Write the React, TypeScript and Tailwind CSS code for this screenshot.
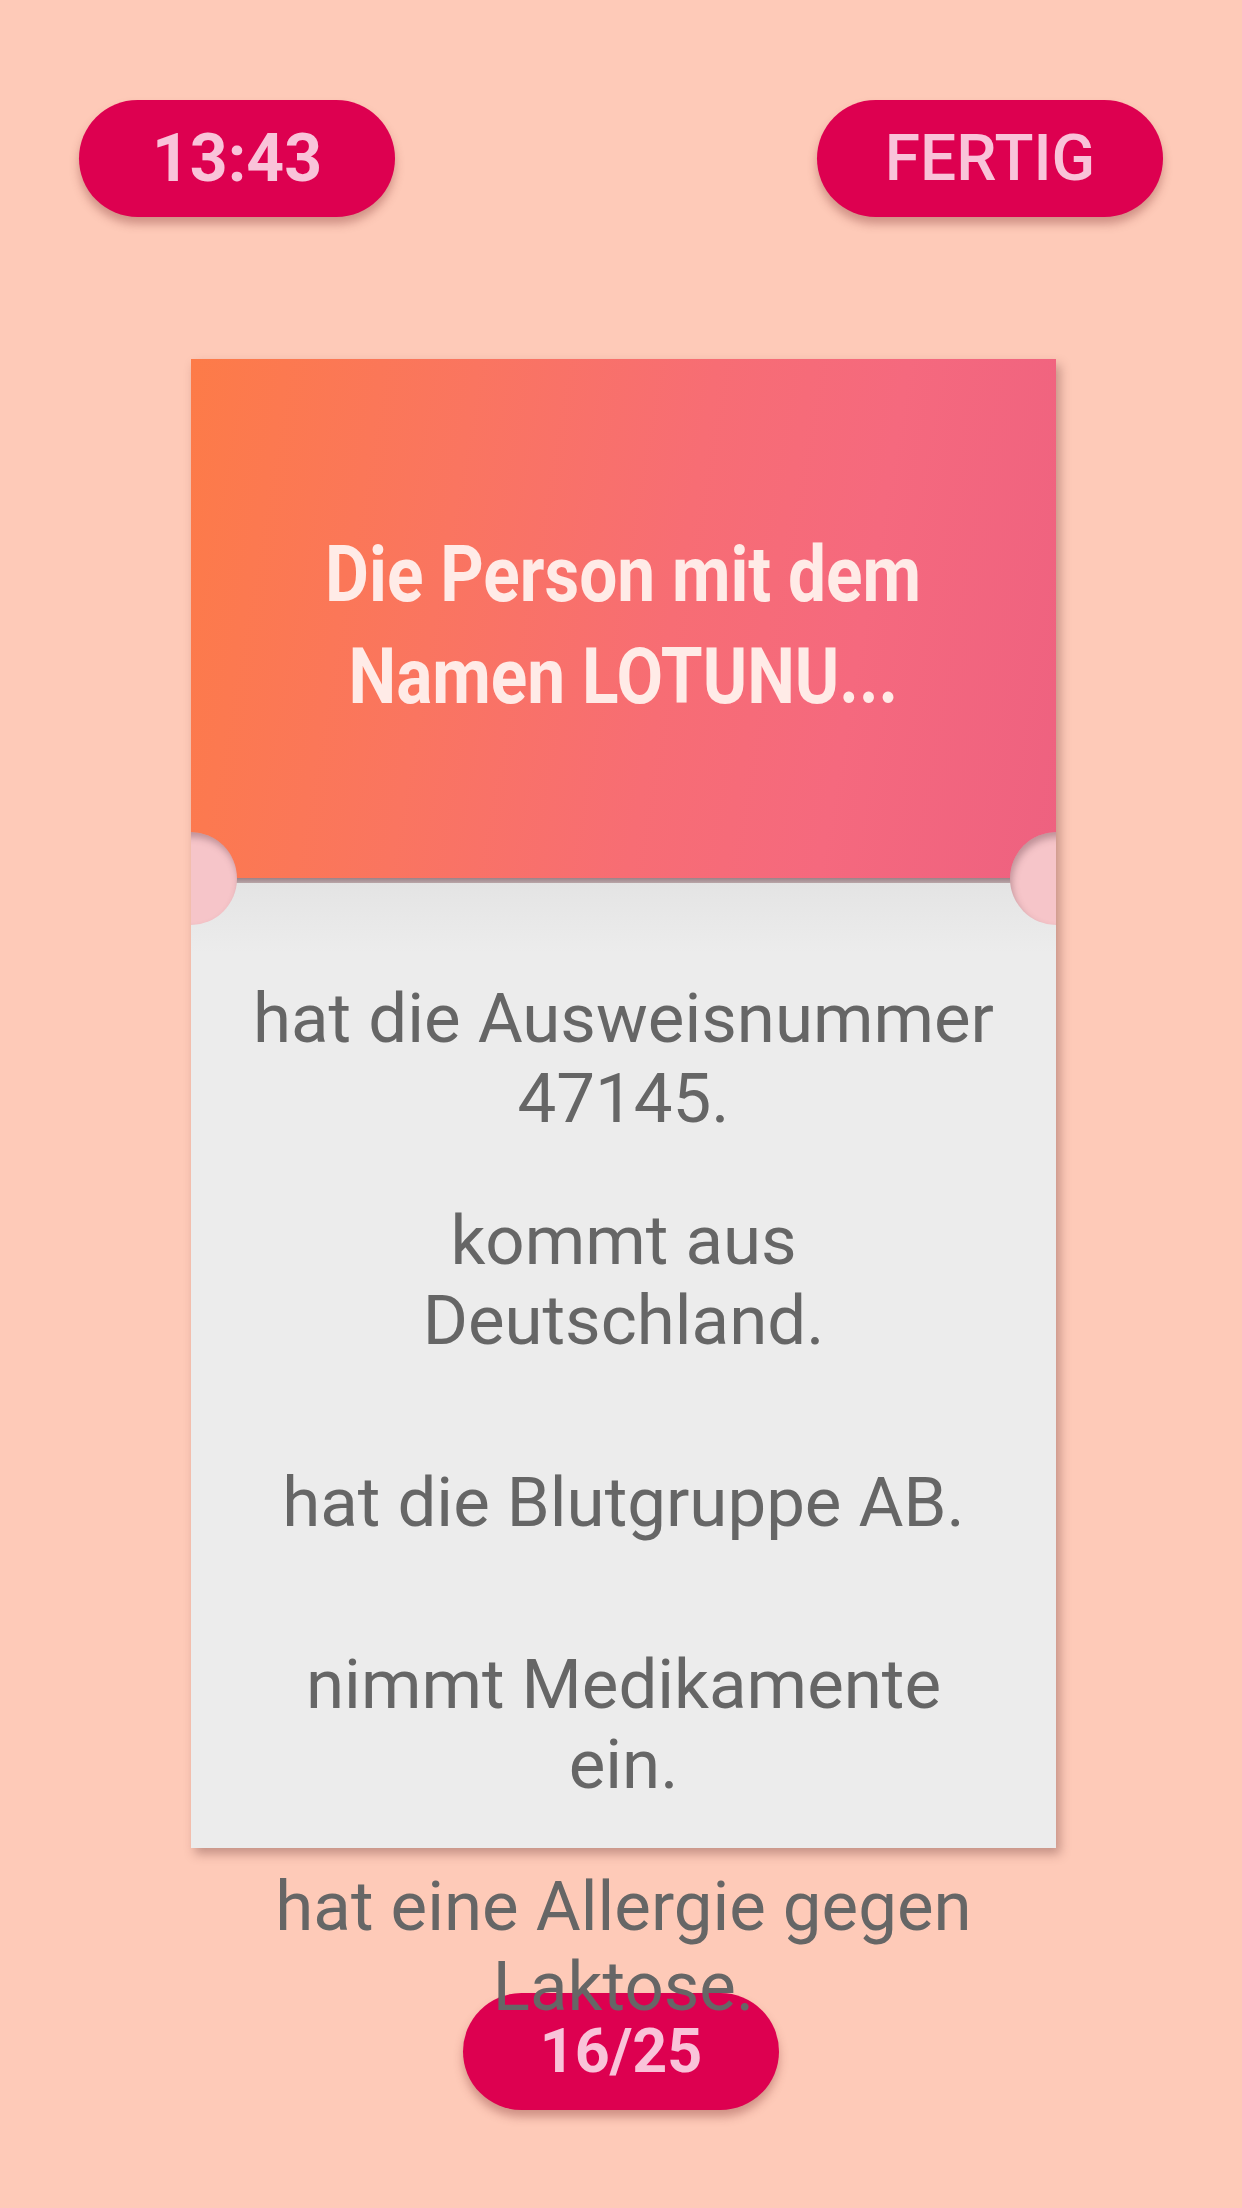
import React from "react";

const items: string[][] = [
  ["hat die Ausweisnummer", "47145."],
  ["kommt aus", "Deutschland."],
  ["hat die Blutgruppe AB."],
  ["nimmt Medikamente", "ein."],
  ["hat eine Allergie gegen", "Laktose."],
];

export default function App() {
  return (
    <div className="relative w-[1242px] h-[2208px] overflow-hidden bg-[#fecab8] font-['Roboto',sans-serif]">
      {/* top bar */}
      <div className="flex justify-between px-[79px] pt-[100px]">
        <div className="flex h-[117px] w-[316px] items-center justify-center rounded-full bg-[#dd0050] shadow-[0_7px_10px_rgba(120,40,40,0.35)]">
          <span className="text-[66px] font-bold leading-none text-[#f9c3d9]">13:43</span>
        </div>
        <div className="flex h-[117px] w-[346px] items-center justify-center rounded-full bg-[#dd0050] shadow-[0_7px_10px_rgba(120,40,40,0.35)]">
          <span className="text-[64px] font-medium leading-none text-[#f9c3d9]">FERTIG</span>
        </div>
      </div>

      {/* card */}
      <div className="relative z-20 ml-[191px] mt-[142px] w-[865px] shadow-[4px_6px_10px_rgba(90,40,40,0.35)]">
        <div className="flex h-[519px] items-center justify-center bg-[linear-gradient(100deg,#fd7b48_0%,#fa7560_30%,#f76d74_55%,#f5697e_75%,#ee6180_100%)] pt-[15px]">
          <div className="flex flex-col items-center text-[78px] font-bold leading-[101.6px] text-[#ffebe7]">
            <span className="inline-block scale-x-[0.866] whitespace-nowrap">Die Person mit dem</span>
            <span className="inline-block scale-x-[0.866] whitespace-nowrap">Namen LOTUNU...</span>
          </div>
        </div>
        <div className="h-[5px] bg-[linear-gradient(to_bottom,#9c8288,#b9a6a8)]" />
        <div className="h-[965px] bg-[linear-gradient(to_bottom,#e4e4e4,#ececec_70px)] pt-[65px]">
          {items.map((lines, i) => (
            <div key={i} className="flex h-[222px] flex-col items-center justify-center text-[69px] leading-[80px] text-[#666666]">
              {lines.map((l, j) => (
                <span key={j} className="whitespace-nowrap">{l}</span>
              ))}
            </div>
          ))}
        </div>

        {/* notches */}
        <div className="absolute left-0 top-[473px] h-[93px] w-[46px] overflow-hidden">
          <div className="absolute left-[-47px] top-0 h-[93px] w-[93px] rounded-full bg-[#f6c5c9] shadow-[inset_2px_5px_7px_rgba(90,50,60,0.35)]" />
        </div>
        <div className="absolute right-0 top-[473px] h-[93px] w-[46px] overflow-hidden">
          <div className="absolute right-[-47px] top-0 h-[93px] w-[93px] rounded-full bg-[#f6c5c9] shadow-[inset_2px_5px_7px_rgba(90,50,60,0.35)]" />
        </div>
      </div>

      {/* counter */}
      <div className="absolute bottom-[98px] left-[463px] z-10 flex h-[117px] w-[316px] items-center justify-center rounded-full bg-[#dd0050] shadow-[0_7px_10px_rgba(120,40,40,0.35)]">
        <span className="text-[61px] font-bold leading-none text-[#f9c3d9]">16/25</span>
      </div>
    </div>
  );
}
